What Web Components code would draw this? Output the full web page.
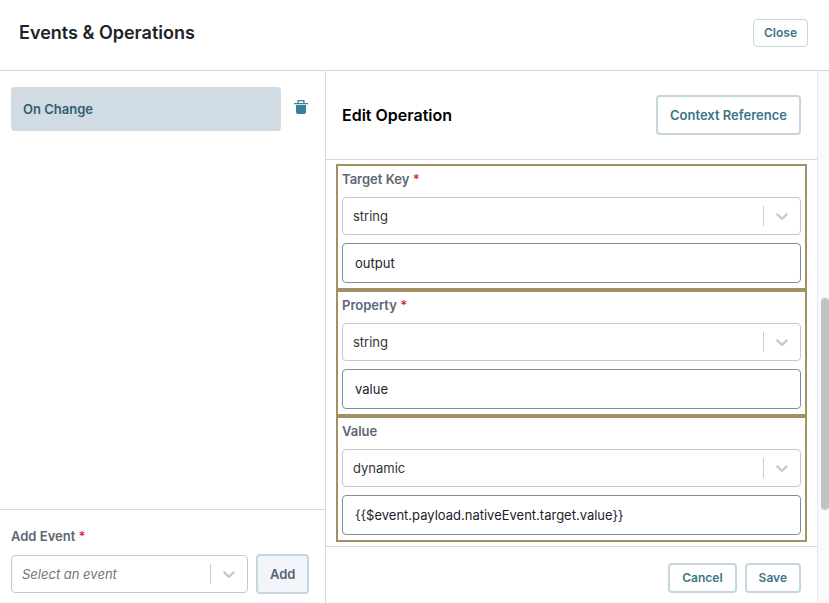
<!DOCTYPE html>
<html lang="en">
<head>
<meta charset="utf-8">
<meta name="viewport" content="width=device-width, initial-scale=1">
<title>Events &amp; Operations</title>
<style>
  :root {
    --line: #d0d9dd;
    --teal: #3d7588;
    --button-line: #c6d6dc;
    --label: #5c6773;
    --required: #d02c42;
    --frame: #a29164;
  }
  body {
    margin: 0;
    background: #fff;
    color: #1c222b;
    font: 13px/18px Inter, "Liberation Sans", sans-serif;
  }
</style>
</head>
<body>
<events-dialog></events-dialog>

<script>
/* importNode creates nested elements already upgraded, so a parent connects before its children */
function define(name, html, setup) {
  const template = document.createElement('template');
  template.innerHTML = html;
  customElements.define(name, class extends HTMLElement {
    constructor() {
      super();
      this.attachShadow({ mode: 'open' }).append(document.importNode(template.content, true));
    }
    connectedCallback() {
      if (setup) setup(this, this.shadowRoot);
    }
  });
}

/* Button: size "small" (thin border), "medium", default large; "filled" adds a tint */
define('ui-button', `
  <style>
    :host { display: inline-flex; }
    button {
      box-sizing: border-box; width: 100%; height: 40px; padding: 0 12px;
      border: 2px solid var(--button-line); border-radius: 4px;
      background: #fff; color: var(--teal);
      font: 600 13px/18px Inter, "Liberation Sans", sans-serif;
      white-space: nowrap; cursor: pointer;
    }
    :host([size="small"]) button { height: 28px; padding: 0 10px; border-width: 1px; font-size: 12px; }
    :host([size="medium"]) button { height: 30px; font-size: 12px; }
    :host([filled]) button { background: #f2f6fa; color: #566373; }
  </style>
  <button type="button"><slot></slot></button>
`);

/* Drop-down with a separator and chevron laid over its right end */
define('ui-select', `
  <style>
    :host { display: block; min-width: 0; }
    .box { display: grid; grid-template-columns: minmax(0, 1fr) 38px; align-items: center; }
    select {
      appearance: none; box-sizing: border-box; grid-area: 1 / 1 / 2 / 3;
      width: 100%; height: 38px; padding: 0 46px 0 10px; margin: 0;
      border: 1px solid #c6c9cb; border-radius: 4px;
      background: #fff; color: #333;
      font: 13px/18px Inter, "Liberation Sans", sans-serif;
    }
    select.empty { font-style: italic; color: #757575; }
    .mark {
      grid-area: 1 / 2; height: 20px; display: flex; align-items: center; padding-left: 8px;
      border-left: 1px solid #ccc; pointer-events: none;
    }
    svg { display: block; }
  </style>
  <div class="box">
    <select><option></option></select>
    <span class="mark">
      <svg width="20" height="20" viewBox="0 0 20 20" fill="#c8c9ca" aria-hidden="true"><path d="M4.516 7.548c0.436-0.446 1.043-0.481 1.576 0l3.908 3.747 3.908-3.747c0.533-0.481 1.141-0.446 1.574 0 0.436 0.445 0.408 1.197 0 1.615-0.406 0.418-4.695 4.502-4.695 4.502-0.217 0.223-0.502 0.335-0.787 0.335s-0.57-0.112-0.789-0.335c0 0-4.287-4.084-4.695-4.502s-0.436-1.17 0-1.615z"/></svg>
    </span>
  </div>
`, (host, root) => {
  const select = root.querySelector('select');
  select.setAttribute('aria-label', host.getAttribute('label'));
  select.classList.toggle('empty', host.hasAttribute('empty'));
  root.querySelector('option').textContent = host.getAttribute('value');
});

define('field-label', `
  <style>
    :host { display: block; font-weight: 600; color: var(--label); line-height: 18px; }
    span { display: none; color: var(--required); }
    :host([required]) span { display: inline; }
  </style>
  <slot></slot><span> *</span>
`);

/* Framed group: label, type drop-down and value box */
define('operation-field', `
  <style>
    :host { display: block; border: 2px solid var(--frame); padding: 4px 4px 5px; }
    label { display: block; margin-bottom: 9px; }
    input {
      box-sizing: border-box; display: block; width: 100%; height: 40px; margin: 8px 0 0; padding: 0 12px;
      border: 1px solid #818d96; border-radius: 4px; background: #fff; color: #1c222b;
      font: 13px/18px Inter, "Liberation Sans", sans-serif;
    }
  </style>
  <label for="value"><field-label></field-label></label>
  <ui-select></ui-select>
  <input id="value" type="text">
`, (host, root) => {
  const label = root.querySelector('field-label');
  const select = root.querySelector('ui-select');
  label.textContent = host.getAttribute('label');
  label.toggleAttribute('required', host.hasAttribute('required'));
  select.setAttribute('label', host.getAttribute('label') + ' type');
  select.setAttribute('value', host.getAttribute('type'));
  root.querySelector('input').value = host.getAttribute('value');
});

define('event-item', `
  <style>
    :host { display: flex; gap: 13px; align-items: flex-start; }
    .name {
      flex: 1; height: 44px; padding: 0 12px; border: 0; border-radius: 4px;
      background: #d1dbe3; color: #2f5f73; text-align: left;
      font: 600 13px/18px Inter, "Liberation Sans", sans-serif;
    }
    .remove { margin: 13px 0 0; padding: 0; border: 0; background: none; cursor: pointer; }
    svg { display: block; }
  </style>
  <button class="name" type="button"><slot></slot></button>
  <button class="remove" type="button" aria-label="Delete event">
    <svg width="14" height="14" viewBox="0 0 14 14" fill="#3c7f98" aria-hidden="true">
      <path d="M3.500 0h7v3H14v1.200H0V3h3.500zM4.800 1.200V3h4.400V1.200z" fill-rule="evenodd"/>
      <path d="M2 5h10v7a2 2 0 0 1-2 2H4a2 2 0 0 1-2-2z"/>
    </svg>
  </button>
`);

define('events-sidebar', `
  <style>
    :host { display: flex; flex-direction: column; border-right: 1px solid var(--line); }
    .list { flex: 1; padding: 16px 17px 16px 11px; }
    footer { border-top: 1px solid var(--line); padding: 17px 16px 9px 11px; }
    .row { display: flex; align-items: center; gap: 8px; margin-top: 9px; }
    ui-select { flex: 1; }
    ui-button { width: 53px; }
  </style>
  <div class="list"><event-item>On Change</event-item></div>
  <footer>
    <field-label required>Add Event</field-label>
    <div class="row">
      <ui-select empty label="Add Event" value="Select an event"></ui-select>
      <ui-button filled>Add</ui-button>
    </div>
  </footer>
`);

define('operation-editor', `
  <style>
    :host { display: flex; flex-direction: column; min-width: 0; }
    header {
      display: flex; align-items: center; justify-content: space-between;
      padding: 24px 16px; border-bottom: 1px solid var(--line);
    }
    h2 { margin: 0; font-size: 16px; line-height: 24px; font-weight: 600; color: #000; }
    .fields { flex: 1; padding: 4px 10px; }
    footer {
      display: flex; justify-content: flex-end; gap: 8px;
      padding: 16px 16px 10px; border-top: 1px solid var(--line);
    }
  </style>
  <header>
    <h2>Edit Operation</h2>
    <ui-button>Context Reference</ui-button>
  </header>
  <div class="fields">
    <operation-field label="Target Key" required type="string" value="output"></operation-field>
    <operation-field label="Property" required type="string" value="value"></operation-field>
    <operation-field label="Value" type="dynamic" value="{{$event.payload.nativeEvent.target.value}}"></operation-field>
  </div>
  <footer>
    <ui-button size="medium">Cancel</ui-button>
    <ui-button size="medium">Save</ui-button>
  </footer>
`);

define('scroll-track', `
  <style>
    :host {
      display: grid; grid-template-rows: 227fr 212fr 93fr; box-sizing: border-box;
      padding-left: 3px; border-left: 1px solid #e8e8e8; background: #fafafa;
    }
    div { grid-row: 2; border-radius: 4px; background: #c2c2c2; }
  </style>
  <div></div>
`);

define('events-dialog', `
  <style>
    :host { display: flex; flex-direction: column; min-height: 100vh; }
    header {
      display: flex; align-items: center; justify-content: space-between;
      padding: 19px 21px 23px 19px; border-bottom: 1px solid var(--line);
    }
    h1 { margin: 0; font-size: 18px; line-height: 28px; font-weight: 600; }
    main { flex: 1; display: grid; grid-template-columns: 326px minmax(0, 1fr) 12px; }
  </style>
  <header>
    <h1>Events &amp; Operations</h1>
    <ui-button size="small">Close</ui-button>
  </header>
  <main>
    <events-sidebar></events-sidebar>
    <operation-editor></operation-editor>
    <scroll-track></scroll-track>
  </main>
`);
</script>
</body>
</html>
